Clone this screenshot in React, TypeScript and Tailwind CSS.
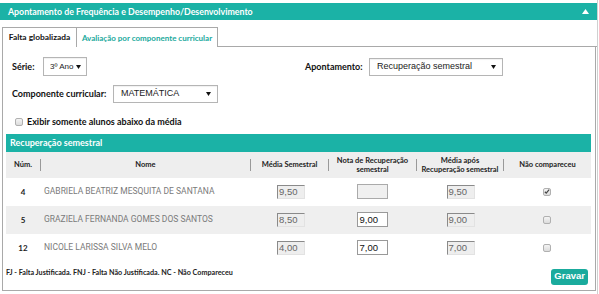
import React from "react";

const rows = [
  { num: "4", nome: "GABRIELA BEATRIZ MESQUITA DE SANTANA", media: "9,50", nota: "", apos: "9,50", nc: true },
  { num: "5", nome: "GRAZIELA FERNANDA GOMES DOS SANTOS", media: "8,50", nota: "9,00", apos: "9,00", nc: false },
  { num: "12", nome: "NICOLE LARISSA SILVA MELO", media: "4,00", nota: "7,00", apos: "7,00", nc: false },
];

const heading = "font-['Lato','Noto_Sans',sans-serif] font-bold";
const arial = "font-['Liberation_Sans',Arial,sans-serif]";

const Select = ({ value, className }: { value: string; className: string }) => (
  <div
    className={`flex items-center justify-between border border-[#b5b5b5] bg-white text-[#222] whitespace-nowrap shadow-[inset_0_1px_1px_rgba(0,0,0,0.06)] ${arial} ${className}`}
  >
    <span>{value}</span>
    <svg width="5" height="4" viewBox="0 0 5 4" className="shrink-0">
      <path d="M0 0h5L2.5 4z" fill="#111" />
    </svg>
  </div>
);

const Checkbox = ({ checked }: { checked?: boolean }) => (
  <div className="w-[8px] h-[8px] rounded-[2px] border border-[#b0b0b0] bg-gradient-to-b from-[#f4f4f4] to-[#dcdcdc] flex items-center justify-center">
    {checked && (
      <svg width="7" height="7" viewBox="0 0 7 7">
        <path d="M1 3.8l1.6 1.6L6 1.2" stroke="#444" strokeWidth="1.4" fill="none" />
      </svg>
    )}
  </div>
);

const ReadOnly = ({ value }: { value: string }) => (
  <div
    className={`w-[28px] h-[14px] bg-[#eeeeee] border-t border-l border-[#8a8a8a] border-r border-b border-r-[#e2e2e2] border-b-[#e2e2e2] pl-[1px] text-[9.5px] leading-[12px] text-[#666] ${arial}`}
  >
    {value}
  </div>
);

const Editable = ({ value, disabled }: { value: string; disabled?: boolean }) => (
  <div
    className={`w-[31px] h-[15px] border border-[#999] pl-[2px] text-[9.5px] leading-[13px] text-[#111] ${arial} ${
      disabled ? "bg-[#f0f0f0] border-[#aaa]" : "bg-white"
    }`}
  >
    {value}
  </div>
);

const HeadCell = ({ children }: { children: React.ReactNode }) => (
  <div className="flex items-center">
    <div className="w-px h-[12px] bg-[#999]" />
    <div className="flex-1 text-center leading-[9px]">{children}</div>
  </div>
);

export default function App() {
  return (
    <div className="w-[599px] h-[294px] bg-white overflow-hidden flex">
      <div className="w-[597px] pt-[3px] flex flex-col">
        <div className="h-[17px] bg-[#1bb2a6] flex items-center justify-between pl-[8px] pr-[8px]">
          <span className={`${heading} text-[8.8px] text-white`}>
            Apontamento de Frequência e Desempenho/Desenvolvimento
          </span>
          <svg width="7" height="5" viewBox="0 0 7 5">
            <path d="M0 5h7L3.5 0z" fill="#fff" />
          </svg>
        </div>

        <div className="mt-[7px] pl-[2px] flex items-end">
          <div className="w-[75px] h-[20px] border-t border-l border-r border-[#a9a9a9] bg-white flex items-center justify-center">
            <span className={`${heading} text-[8.4px] text-[#111]`}>Falta globalizada</span>
          </div>
          <div className="w-[141px] h-[20px] border-t border-r border-[#a9a9a9] bg-white flex items-center justify-center">
            <span className={`${heading} text-[8px] text-[#1aa99d]`}>Avaliação por componente curricular</span>
          </div>
          <div className="flex-1 border-b border-[#a9a9a9]" />
        </div>

        <div className="ml-[2px] w-[594px] h-[244px] border-l border-r border-b border-[#a9a9a9] flex flex-col">
          <div className="mt-[10px] flex items-center">
            <div className="w-[302px] pl-[9px] flex items-center">
              <span className={`${heading} text-[9px] text-[#111] w-[31px]`}>Série:</span>
              <Select value="3º Ano" className="w-[44px] h-[19px] pl-[6px] pr-[5px] text-[8px]" />
            </div>
            <div className="flex items-center">
              <span className={`${heading} text-[9px] text-[#111] w-[64px]`}>Apontamento:</span>
              <Select value="Recuperação semestral" className="w-[134px] h-[18px] pl-[7px] pr-[6px] text-[9px]" />
            </div>
          </div>

          <div className="mt-[9px] pl-[9px] flex items-center">
            <span className={`${heading} text-[9px] text-[#111] w-[101px]`}>Componente curricular:</span>
            <Select value="MATEMÁTICA" className="w-[105px] h-[18px] pl-[7px] pr-[6px] text-[9px]" />
          </div>

          <div className="mt-[12px] pl-[12px] flex items-center gap-[4px]">
            <Checkbox />
            <span className={`${heading} text-[9px] text-[#111]`}>Exibir somente alunos abaixo da média</span>
          </div>

          <div className="mt-[5px] ml-[3px] w-[585px]">
            <div className="h-[18px] bg-[#1bb2a6] flex items-center pl-[4px]">
              <span className={`${heading} text-[9px] text-white`}>Recuperação semestral</span>
            </div>

            <div
              className={`h-[26px] bg-[#eeeeee] grid grid-cols-[34px_210px_78px_88px_87px_88px] ${heading} text-[7.5px] text-[#222]`}
            >
              <div className="flex items-center justify-center">Núm.</div>
              <HeadCell>Nome</HeadCell>
              <HeadCell>Média Semestral</HeadCell>
              <HeadCell>
                Nota de Recuperação
                <br />
                semestral
              </HeadCell>
              <HeadCell>
                Média após
                <br />
                Recuperação semestral
              </HeadCell>
              <HeadCell>Não compareceu</HeadCell>
            </div>

            {rows.map((r, i) => (
              <div
                key={r.num}
                className={`h-[28px] grid grid-cols-[34px_210px_78px_88px_87px_88px] items-center ${
                  i === 1 ? "bg-[#efefef]" : "bg-white"
                }`}
              >
                <div className={`${heading} text-[8px] text-[#222] text-center`}>{r.num}</div>
                <div className="pl-[4px] font-['Roboto',sans-serif] text-[8.5px] text-[#7a7a7a] whitespace-nowrap">
                  {r.nome}
                </div>
                <div className="flex justify-center pl-[4px]">
                  <ReadOnly value={r.media} />
                </div>
                <div className="flex justify-center">
                  <Editable value={r.nota} disabled={r.nota === ""} />
                </div>
                <div className="flex justify-center pl-[2px]">
                  <ReadOnly value={r.apos} />
                </div>
                <div className="flex justify-center">
                  <Checkbox checked={r.nc} />
                </div>
              </div>
            ))}

            <div className="mt-[7px] flex items-start justify-between pr-[3px]">
              <span className={`${heading} text-[7.2px] leading-[8px] text-[#222]`}>
                FJ - Falta Justificada. FNJ - Falta Não Justificada. NC - Não Compareceu
              </span>
              <button
                className={`h-[16px] px-[3px] rounded-[3px] bg-[#1aab9d] text-white font-bold text-[9.5px] ${arial}`}
              >
                Gravar
              </button>
            </div>
          </div>
        </div>
      </div>
      <div className="w-px h-full bg-[#d0d0d0]" />
    </div>
  );
}
